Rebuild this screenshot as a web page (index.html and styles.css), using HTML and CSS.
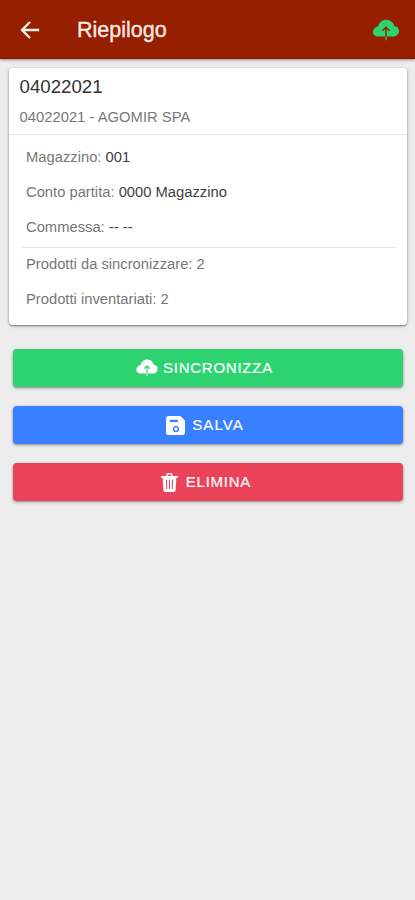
FILE: index.html
```html
<!DOCTYPE html>
<html lang="it">
<head>
<meta charset="utf-8">
<title>Riepilogo</title>
<link rel="stylesheet" href="styles.css">
</head>
<body>
<svg class="defs" aria-hidden="true">
  <symbol id="cloud" viewBox="0 0 26 22">
    <path fill="currentColor" d="M12.300 17.600H5.500C2.200 17.600 0 15.800 0 12.700 0 9.900 2.100 7.800 5.100 7.200 6.300 3.200 9.300.7 13 .7c4.200 0 7.400 2.600 8.200 6.400 2.900.3 4.800 2.300 4.800 5 0 3.100-2.400 5.500-5.600 5.500H13.700v-7.600l2.300 2.200 1-1-4-3.900-4 3.900 1 1 2.300-2.200z"/>
    <path fill="currentColor" opacity=".75" d="M12.200 17.500h1.600v3.700h-1.600z"/>
  </symbol>
</svg>
<header class="toolbar">
  <svg class="back" viewBox="0 0 20 20"><path d="M10 2 2 10l8 8M2.200 10h17"/></svg>
  <h1 class="title">Riepilogo</h1>
  <svg class="sync"><use href="#cloud"/></svg>
</header>
<main class="content">
  <section class="card">
    <div class="card-head">
      <h2>04022021</h2>
      <p>04022021 - AGOMIR SPA</p>
    </div>
    <div class="details">
      <p>Magazzino: <b>001</b></p>
      <p>Conto partita: <b>0000 Magazzino</b></p>
      <p>Commessa: <b>-- --</b></p>
    </div>
    <div class="totals">
      <p>Prodotti da sincronizzare: 2</p>
      <p>Prodotti inventariati: 2</p>
    </div>
  </section>
  <div class="actions">
    <button class="btn success"><svg class="i-cloud"><use href="#cloud"/></svg><span>SINCRONIZZA</span></button>
    <button class="btn primary"><svg class="i-save" viewBox="0 0 20 20"><path fill="currentColor" fill-rule="evenodd" d="M3 0h12.200L20 4.800V17a3 3 0 0 1-3 3H3a3 3 0 0 1-3-3V3a3 3 0 0 1 3-3zM4 4v2.400h8.500V4zM10.500 10.300a3.400 3.400 0 1 0 .01 0zm0 1.600a1.800 1.800 0 1 1-.01 0z"/></svg><span>SALVA</span></button>
    <button class="btn danger"><svg class="i-trash" viewBox="0 0 18 20"><path fill="currentColor" fill-rule="evenodd" d="M1 3h4.500V2a2 2 0 0 1 2-2h3a2 2 0 0 1 2 2v1H17a1 1 0 0 1 0 2.200h-.8L15.500 18a2 2 0 0 1-2 2h-9a2 2 0 0 1-2-2L1.800 5.200H1A1 1 0 0 1 1 3zM7 3h4V1.500H7zM5.200 7l.4 10h1.100L6.300 7zM8.450 7v10h1.100V7zM11.700 7l-.4 10h1.100l.4-10z"/></svg><span>ELIMINA</span></button>
  </div>
</main>
</body>
</html>
```
FILE: styles.css
```css
* { box-sizing: border-box; }
body {
  margin: 0;
  min-height: 900px;
  background: #ededed;
  font-family: "Liberation Sans", Arial, sans-serif;
  color: #777;
}
h1, h2, p { margin: 0; font-weight: 400; }
.defs { display: none; }
.toolbar {
  display: flex;
  align-items: center;
  height: 59px;
  padding: 2px 16px 0 20px;
  background: #961f00;
  border-bottom: 1px solid #870f02;
  box-shadow: 0 1px 3px rgba(0, 0, 0, .4);
  color: #fbe9e5;
}
.back {
  width: 20px;
  height: 20px;
  fill: none;
  stroke: #fff0ec;
  stroke-width: 2.3;
}
.title {
  flex: 1;
  margin-left: 37px;
  font-size: 21.5px;
  line-height: 28px;
  -webkit-text-stroke: .35px currentColor;
}
.sync { width: 26px; height: 22px; color: #2dd36f; }
.content { padding: 9px 8px 0 9px; }
.card {
  height: 257px;
  background: #fff;
  border-radius: 4px;
  box-shadow: 0 1px 2px rgba(0, 0, 0, .45), 0 1px 5px rgba(0, 0, 0, .12);
}
.card-head {
  height: 67px;
  padding: 7px 10.5px 0;
  border-bottom: 1px solid #e3e3e3;
}
.card-head h2 { font-size: 18.7px; line-height: 24px; color: #333; }
.card-head p { margin-top: 8px; font-size: 14.8px; line-height: 20px; }
.details { padding: 5px 17px 0; height: 112px; }
.details p { font-size: 14.75px; line-height: 35px; }
.details b { font-weight: 400; color: #414141; }
.totals { margin: 0 11px 0 13px; padding-left: 4px; border-top: 1px solid #e3e3e3; }
.totals p { font-size: 14.75px; line-height: 37px; }
.totals p:first-child { line-height: 33px; }
.actions {
  display: flex;
  flex-direction: column;
  gap: 19px;
  padding: 24px 4px 0;
}
.btn {
  display: flex;
  align-items: center;
  justify-content: center;
  height: 38px;
  border: 0;
  border-radius: 4px;
  padding: 0;
  color: #fff;
  font: 15px "Liberation Sans", Arial, sans-serif;
  letter-spacing: .75px;
  -webkit-text-stroke: .2px currentColor;
  box-shadow: 0 1px 3px rgba(0, 0, 0, .45);
}
.btn span { padding-bottom: 2px; }
.success { background: #2dd36f; padding-right: 7px; }
.primary { background: #3880ff; padding-right: 6px; letter-spacing: 1.1px; }
.danger { background: #eb445a; padding-right: 4px; }
.i-cloud { width: 22px; height: 18px; margin-right: 5px; }
.i-save { width: 19px; height: 19px; margin-right: 7px; }
.i-trash { width: 17px; height: 19px; margin-right: 8px; }
```
